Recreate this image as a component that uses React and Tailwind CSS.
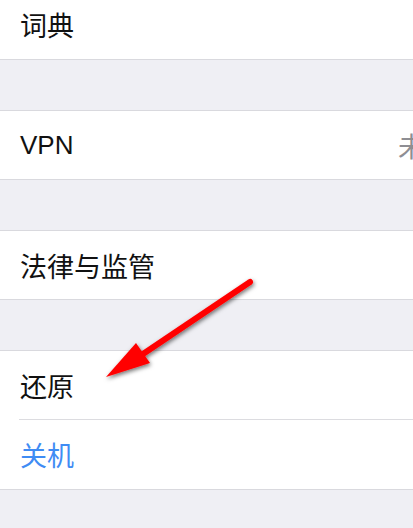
import React from 'react';

const font = { fontFamily: '"Noto Sans CJK SC", "Liberation Sans", sans-serif' };

const Gap = () => <div className="h-[50px] bg-[#efeff4]" />;

const Row = ({ children, blue, className = '' }) => (
  <div
    className={`flex h-[68px] items-center overflow-hidden pl-5 text-[27px] leading-none whitespace-nowrap ${
      blue ? 'text-[#3f8cf4]' : 'text-[#111111]'
    } ${className}`}
  >
    {children}
  </div>
);

const Section = ({ children }) => (
  <div className="border-y border-[#d9d9de] bg-white">{children}</div>
);

const Arrow = () => (
  <svg
    className="pointer-events-none absolute left-0 top-0"
    width="413"
    height="528"
    viewBox="0 0 413 528"
  >
    <defs>
      <filter id="shadow" x="-20%" y="-20%" width="140%" height="140%">
        <feDropShadow dx="1" dy="2" stdDeviation="2" floodColor="#000" floodOpacity="0.55" />
      </filter>
    </defs>
    <g filter="url(#shadow)">
      <line x1="250" y1="282" x2="140" y2="356" stroke="#ff0000" strokeWidth="6" strokeLinecap="round" />
      <polygon points="106,377 136,343 150,363" fill="#ff0000" />
    </g>
  </svg>
);

export default function App() {
  return (
    <div className="relative h-[528px] w-[413px] overflow-hidden bg-[#efeff4]" style={font}>
      <div className="border-b border-[#d9d9de] bg-white">
        <div className="flex h-[59px] items-center pb-[10px] pl-5 text-[27px] leading-none text-[#111111]">
          词典
        </div>
      </div>
      <Gap />
      <Section>
        <Row>
          <span className="w-[378px] shrink-0 text-[26px]" style={{ fontFamily: '"Liberation Sans", sans-serif' }}>
            VPN
          </span>
          <span className="shrink-0 text-[#8e8e93]">未连接</span>
        </Row>
      </Section>
      <Gap />
      <Section>
        <Row>法律与监管</Row>
      </Section>
      <Gap />
      <Section>
        <Row>还原</Row>
        <div className="ml-[19px] h-px bg-[#dcdce0]" />
        <Row blue className="h-[69px]">关机</Row>
      </Section>
      <Arrow />
    </div>
  );
}
